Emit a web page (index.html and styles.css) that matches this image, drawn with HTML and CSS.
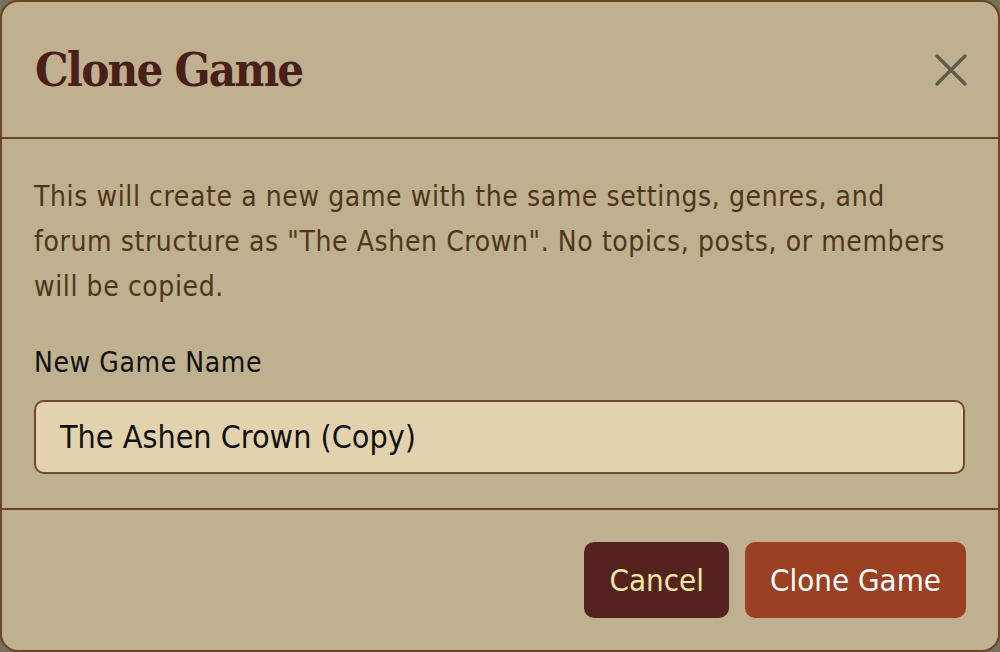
FILE: index.html
```html
<!DOCTYPE html>
<html>
<head>
<meta charset="utf-8">
<link rel="stylesheet" href="styles.css">
</head>
<body>
<div class="modal">
  <div class="modal-header">
    <h1 class="title">Clone Game</h1>
    <button class="close" aria-label="Close">
      <svg width="32" height="32" viewBox="0 0 32 32"><path d="M2 2 L30 30 M30 2 L2 30" stroke="#5f5a4b" stroke-width="3.2" stroke-linecap="round" fill="none"/></svg>
    </button>
  </div>
  <div class="modal-body">
    <p class="desc">This will create a new game with the same settings, genres, and forum structure as "The Ashen Crown". No topics, posts, or members will be copied.</p>
    <label class="label">New Game Name</label>
    <div class="input">The Ashen Crown (Copy)</div>
  </div>
  <div class="modal-footer">
    <button class="btn btn-cancel">Cancel</button>
    <button class="btn btn-primary">Clone Game</button>
  </div>
</div>
</body>
</html>
```
FILE: styles.css
```css
html, body {
  margin: 0;
  padding: 0;
  background: #76705f;
}
.modal {
  width: 1000px;
  height: 652px;
  box-sizing: border-box;
  border: 2px solid #6b4423;
  border-radius: 18px;
  background: #bfb08f;
  display: flex;
  flex-direction: column;
  font-family: "DejaVu Sans Condensed", "DejaVu Sans", sans-serif;
  overflow: hidden;
}
.modal-header {
  height: 137px;
  flex: 0 0 auto;
  box-sizing: border-box;
  border-bottom: 2px solid #6b4423;
  display: flex;
  align-items: center;
  justify-content: space-between;
  padding: 0 32px 0 33px;
}
.title {
  margin: 0;
  font-family: "DejaVu Serif Condensed", "DejaVu Serif", serif;
  font-weight: bold;
  font-size: 47px;
  color: #4a1e19;
  letter-spacing: -1.8px;
}
.close {
  background: none;
  border: 0;
  padding: 0;
  width: 32px;
  height: 32px;
  display: flex;
  margin-right: -1px;
}
.modal-body {
  flex: 0 0 auto;
  height: 371px;
  box-sizing: border-box;
  border-bottom: 2px solid #6b4423;
  padding: 35px 33px 0 32px;
}
.desc {
  margin: 0;
  font-size: 28px;
  letter-spacing: 0.6px;
  line-height: 45px;
  color: #4f361b;
}
.label {
  display: block;
  margin-top: 34px;
  font-size: 28px;
  letter-spacing: 0.6px;
  line-height: 40px;
  color: #111;
}
.input {
  margin-top: 17px;
  height: 74px;
  box-sizing: border-box;
  border: 2px solid #704a28;
  border-radius: 10px;
  background: #e2d3ae;
  padding: 0 24px;
  display: flex;
  align-items: center;
  font-size: 32px;
  color: #111;
}
.modal-footer {
  flex: 1;
  display: flex;
  justify-content: flex-end;
  align-items: center;
  gap: 16px;
  padding: 0 32px;
}
.btn {
  height: 76px;
  border: 0;
  border-radius: 10px;
  font-family: "DejaVu Sans Condensed", "DejaVu Sans", sans-serif;
  font-size: 31px;
  padding: 0 25px;
}
.btn-cancel {
  background: #542320;
  color: #f5e6a3;
}
.btn-primary {
  background: #9b4022;
  color: #fff;
}
```
